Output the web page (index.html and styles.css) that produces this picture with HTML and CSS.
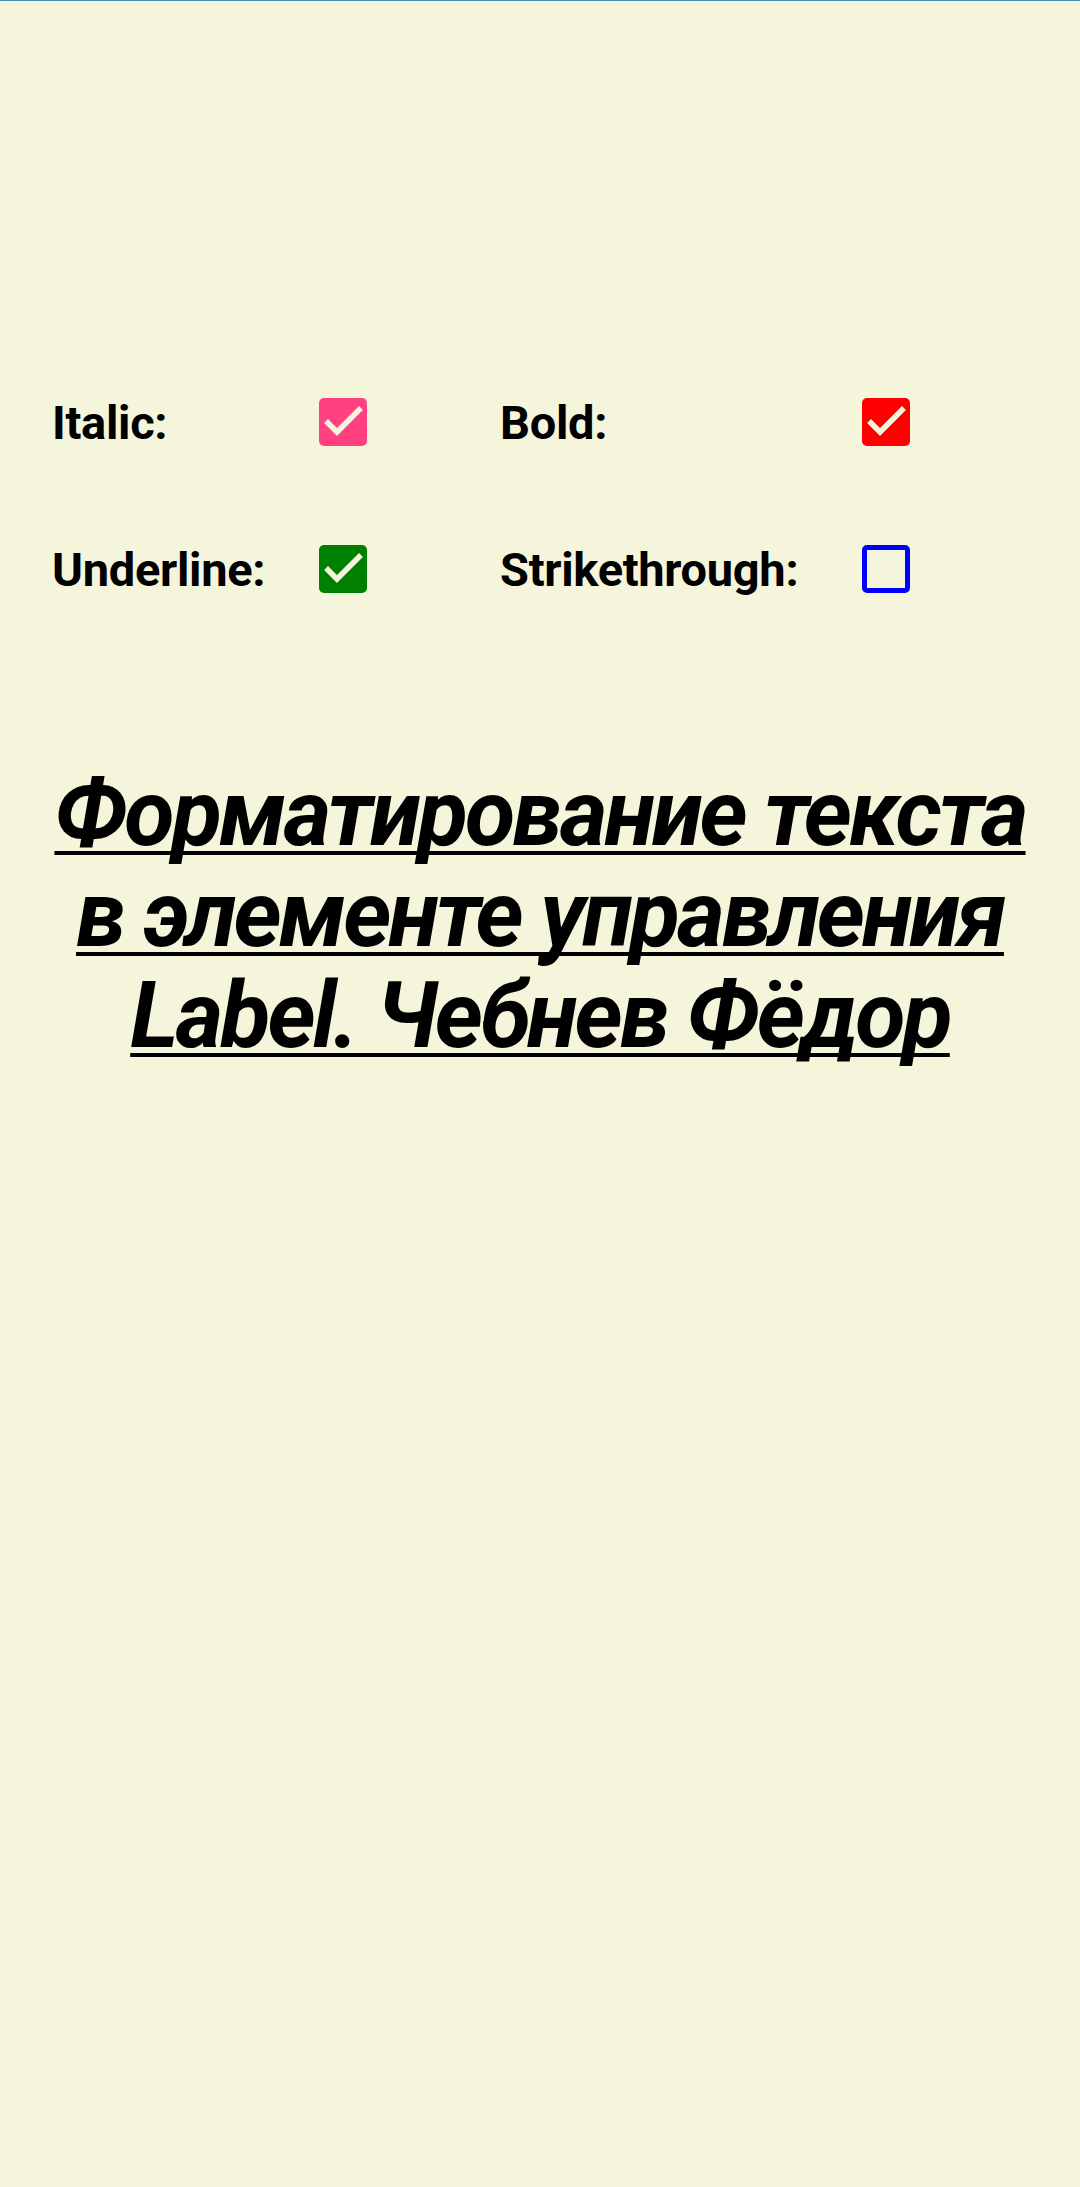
FILE: index.html
```html
<!DOCTYPE html>
<html lang="ru">
<head>
<meta charset="utf-8">
<title>Label</title>
<link rel="stylesheet" href="styles.css">
</head>
<body>
<div class="topline"></div>
<main class="screen">
  <section class="options">
    <div class="pair pair-left">
      <span class="label">Italic:</span>
      <span class="box box-pink"><svg viewBox="0 0 48 48"><path d="M9 25 L18 34 L40 12"/></svg></span>
    </div>
    <div class="pair pair-right">
      <span class="label">Bold:</span>
      <span class="box box-red"><svg viewBox="0 0 48 48"><path d="M9 25 L18 34 L40 12"/></svg></span>
    </div>
    <div class="pair pair-left">
      <span class="label">Underline:</span>
      <span class="box box-green"><svg viewBox="0 0 48 48"><path d="M9 25 L18 34 L40 12"/></svg></span>
    </div>
    <div class="pair pair-right">
      <span class="label">Strikethrough:</span>
      <span class="box box-empty"></span>
    </div>
  </section>
  <h1 class="title">Форматирование текста в элементе управления Label. Чебнев Фёдор</h1>
</main>
</body>
</html>
```

FILE: styles.css
```css
html, body {
  margin: 0;
  padding: 0;
}
body {
  background: #f5f5dc;
  font-family: Roboto, "Noto Sans", "Liberation Sans", sans-serif;
  color: #000;
  width: 1080px;
  min-height: 2187px;
}
.topline {
  height: 1px;
  background: #4a8cbf;
}
.screen {
  display: flex;
  flex-direction: column;
}
.options {
  margin-top: 397px;
  padding-left: 52px;
  display: grid;
  grid-template-columns: 448px auto;
  row-gap: 99px;
}
.pair {
  display: flex;
  align-items: center;
  height: 48px;
}
.label {
  font-size: 47px;
  font-weight: 700;
  line-height: 48px;
  padding-top: 2px;
  letter-spacing: -0.3px;
}
.pair-left .label { width: 267px; }
.pair-right .label { width: 362px; }
.box {
  width: 48px;
  height: 48px;
  box-sizing: border-box;
  border-radius: 5px;
  display: block;
}
.box svg {
  width: 48px;
  height: 48px;
  display: block;
}
.box svg path {
  fill: none;
  stroke: #f5f5dc;
  stroke-width: 5.5;
  stroke-linecap: square;
  stroke-linejoin: miter;
}
.box-pink { background: #ff4081; }
.box-red { background: #ff0000; }
.box-green { background: #008000; }
.box-empty {
  border: 5px solid #0000ff;
  background: transparent;
}
.title {
  margin: 170px 40px 0;
  font-size: 92px;
  line-height: 101px;
  font-weight: 700;
  font-style: italic;
  letter-spacing: -3px;
  text-align: center;
  text-decoration: underline;
  text-decoration-thickness: 4px;
  text-underline-offset: 6px;
  text-decoration-skip-ink: none;
}
```
